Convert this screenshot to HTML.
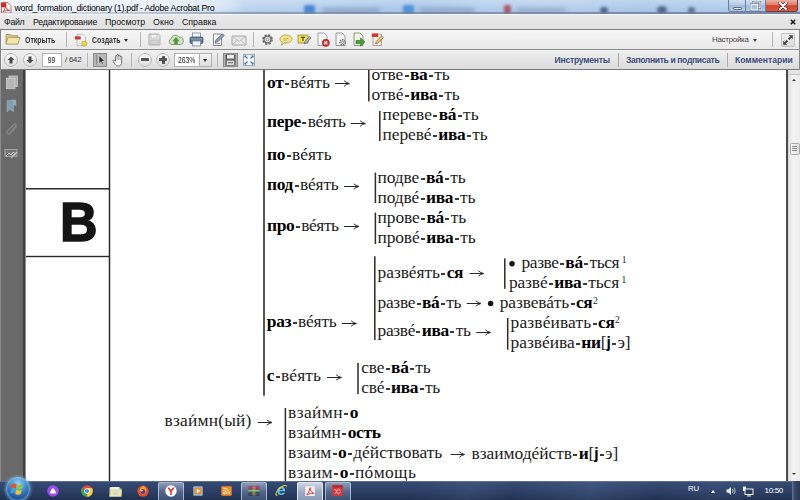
<!DOCTYPE html>
<html lang="ru">
<head>
<meta charset="utf-8">
<title>word_formation_dictionary (1).pdf - Adobe Acrobat Pro</title>
<style>
*{box-sizing:border-box;margin:0;padding:0}
html,body{width:800px;height:500px;overflow:hidden;background:#fff}
body{position:relative;font-family:"Liberation Sans",sans-serif;color:#000}
.abs{position:absolute}
/* ---------- title bar ---------- */
#title{left:0;top:0;width:800px;height:14px;background:linear-gradient(rgba(255,255,255,.22),rgba(255,255,255,0) 55%,rgba(90,110,150,.12)),linear-gradient(90deg,#e6eef7 0,#d5e3f3 120px,#c0d6ef 230px,#b6d0ed 330px,#abc9ea 420px,#b5cfec 470px,#b8d1ed 560px,#aecae9 640px,#b3ceeb 725px);overflow:hidden}
#title .t{left:14.4px;top:2px;font-size:8.8px;line-height:12px;color:#000;white-space:nowrap;letter-spacing:-0.23px}
#title .blob{border-radius:50%;filter:blur(3px)}
/* ---------- menu ---------- */
#menu{left:0;top:14px;width:800px;height:16px;background:linear-gradient(#e9e9e9,#e1e1e1);border-top:1px solid #f2f5f9;border-bottom:1.500px solid #7e7e7e}
#menu span{position:absolute;top:1px;font-size:8.8px;line-height:12px;color:#111;white-space:nowrap}
/* ---------- toolbars ---------- */
#tb1{left:0;top:30px;width:800px;height:20px;background:linear-gradient(#f6f6f6,#e9e9e9);border-bottom:1px solid #8e8e8e;box-shadow:inset 1px 0 0 #808080,inset 2px 0 0 #fafafa}
#tb2{left:0;top:50px;width:800px;height:20px;background:linear-gradient(#f0f0f0,#dcdcdc);border-bottom:1px solid #7c7c7c;box-shadow:inset 1px 0 0 #808080,inset 2px 0 0 #f4f4f4}
.sep{position:absolute;width:1px;background:#b5b5b5}
.tbt{position:absolute;font-size:8.4px;font-weight:bold;color:#333;white-space:nowrap;line-height:10px;transform:scaleX(.83);transform-origin:0 50%}
.rb{position:absolute;width:14px;height:14px;border-radius:50%;background:linear-gradient(#fbfbfb,#dedede);border:1px solid #b4b4b4;box-shadow:0 0 0 .5px rgba(255,255,255,.6)}
.inp{position:absolute;background:#fff;border:1px solid #b3b3b3;font-size:8.300px;line-height:12px;text-align:center;color:#222;letter-spacing:0}
.sq{display:inline-block;transform:scaleX(.82)}
.tab{position:absolute;top:5px;font-size:8.600px;font-weight:bold;line-height:10px;color:#3c4f7c;white-space:nowrap;letter-spacing:-.12px}
/* ---------- doc ---------- */
#side{left:0;top:70px;width:23px;height:411px;background:#696969}
#side svg{opacity:.82}
#page{left:26px;top:70px;width:759.5px;height:411px;background:#fff;overflow:hidden}
.ln{position:absolute;background:#1a1a1a}
.tx{position:absolute;font-family:"Liberation Serif",serif;font-size:17.4px;line-height:20px;white-space:nowrap;color:#1c1c1c}
.tx b{font-weight:bold;color:#000;letter-spacing:-.3px}
.tx sup{font-size:9px;line-height:0;vertical-align:6px}
.tx b.j{font-family:"Liberation Sans",sans-serif;font-size:0.9em}
.tx i.h{display:inline-block;width:4px;height:2px;background:#3a3a3a;vertical-align:3px;margin:0 1.4px}
.ia{position:relative}.ia i{position:absolute;left:0.1em;top:0;font-style:normal;letter-spacing:0}
.ar{position:absolute;overflow:visible}
.bu{position:absolute;width:5.6px;height:5.6px;border-radius:50%;background:#111}
.sp{position:absolute;font-family:"Liberation Serif",serif;font-size:9.5px;line-height:10px;color:#222}
.bigB{left:34.3px;top:121.6px;font-family:"Liberation Sans",sans-serif;font-weight:bold;font-size:55px;line-height:60px;color:#151515;-webkit-text-stroke:1.5px #151515;transform:scaleX(.945);transform-origin:0 0}
/* ---------- taskbar ---------- */
#task{left:0;top:481px;width:800px;height:19px;background:linear-gradient(115deg,rgba(255,255,255,0) 380px,rgba(140,170,220,.10) 430px,rgba(255,255,255,0) 470px,rgba(140,170,220,.13) 540px,rgba(255,255,255,0) 600px,rgba(140,170,220,.08) 650px,rgba(255,255,255,0) 700px),linear-gradient(#6f7f9b 0,#354a72 1.500px,#2c4066 50%,#203252 100%)}
.tbn{position:absolute;top:.500px;height:18.500px;border:1px solid rgba(205,218,240,.7);border-bottom:0;border-radius:2px 2px 0 0;background:linear-gradient(rgba(215,225,242,.55),rgba(140,160,195,.42) 50%,rgba(105,128,170,.40))}
.tbn.act{background:linear-gradient(rgba(235,240,250,.85),rgba(190,203,226,.78) 50%,rgba(165,182,214,.78));border-color:rgba(235,240,250,.9)}
</style>
</head>
<body>
<!-- TITLE -->
<div id="title" class="abs">
  <div class="abs blob" style="left:-10px;top:-6px;width:250px;height:24px;background:rgba(255,255,255,.55);filter:blur(6px)"></div>
  <div class="abs blob" style="left:304px;top:5px;width:11px;height:9px;background:#3f82d2;border-radius:2px;filter:blur(1.8px);opacity:.9"></div>
  <div class="abs blob" style="left:322px;top:8px;width:58px;height:5px;background:#7f97b8;border-radius:2px;filter:blur(2px);opacity:.7"></div>
  <div class="abs blob" style="left:403px;top:5px;width:11px;height:9px;background:#4a8cd8;border-radius:2px;filter:blur(1.8px);opacity:.9"></div>
  <div class="abs blob" style="left:420px;top:8px;width:55px;height:5px;background:#8098b8;border-radius:2px;filter:blur(2px);opacity:.7"></div>
  <div class="abs blob" style="left:504px;top:5px;width:7px;height:9px;background:#b0566c;border-radius:2px;filter:blur(1.6px)"></div>
  <div class="abs blob" style="left:516px;top:8px;width:50px;height:5px;background:#8098b8;border-radius:2px;filter:blur(2px);opacity:.6"></div>
  <div class="abs blob" style="left:600px;top:7px;width:8px;height:7px;background:#4f6688;filter:blur(1.8px)"></div>
  <div class="abs blob" style="left:657px;top:6px;width:10px;height:8px;background:#4f6688;filter:blur(1.8px)"></div>
  <div class="abs blob" style="left:688px;top:7px;width:7px;height:7px;background:#5a7090;filter:blur(1.8px)"></div>
  <div class="abs" style="left:0;top:12px;width:800px;height:2px;background:linear-gradient(90deg,rgba(120,135,160,.0) 0,rgba(110,125,150,.55) 240px,rgba(100,118,148,.75) 100%)"></div>
  <svg class="abs" style="left:1px;top:1.500px" width="10.500" height="11.500" viewBox="0 0 10 11"><path d="M.5.5h6l3 3v7h-9z" fill="#fff" stroke="#a33" stroke-width=".7"/><rect x="0" y="1" width="5" height="4" fill="#d22"/><path d="M2 9.5c1.5-2 2-4 2.300-5.500c.4 2 2 3.500 4 4c-2-.2-4.500.3-6.300 1.500z" fill="none" stroke="#c22" stroke-width=".8"/></svg>
  <div class="abs t">word_formation_dictionary (1).pdf - Adobe Acrobat Pro</div>
  <!-- window buttons -->
  <div class="abs" style="left:727.500px;top:0;width:18.500px;height:12px;background:linear-gradient(#d3e0f0,#b4cbe6 45%,#9fbbdd 52%,#b3cbe6);border:1px solid #6d7f9c;border-top:0;border-radius:0 0 0 3px"></div>
  <div class="abs" style="left:746px;top:0;width:19.500px;height:12px;background:linear-gradient(#d3e0f0,#b4cbe6 45%,#9fbbdd 52%,#b3cbe6);border:1px solid #6d7f9c;border-top:0;border-left:0"></div>
  <div class="abs" style="left:765.500px;top:0;width:32.500px;height:12px;background:linear-gradient(#edb3a6,#de7f6c 42%,#cf452e 52%,#d8573e);border:1px solid #7a3a30;border-top:0;border-left:0;border-radius:0 0 3px 0"></div>
  <div class="abs" style="left:733px;top:7px;width:9px;height:3px;background:#fff;border:.8px solid #5a6f8f;border-radius:1px"></div>
  <svg class="abs" style="left:750px;top:1px" width="11" height="10" viewBox="0 0 11 10"><rect x="3.200" y="1" width="6.800" height="5.600" fill="#b9cde6" stroke="#4f6384" stroke-width="2.200"/><rect x="3.200" y="1" width="6.800" height="5.600" fill="none" stroke="#fff" stroke-width="1.100"/><rect x="1" y="3.400" width="6.800" height="5.600" fill="#a9c0de" stroke="#4f6384" stroke-width="2.200"/><rect x="1" y="3.400" width="6.800" height="5.600" fill="#a9c0de" stroke="#fff" stroke-width="1.100"/></svg>
  <svg class="abs" style="left:777.500px;top:2px" width="10" height="8" viewBox="0 0 10 8"><path d="M2 1L8 7M8 1L2 7" stroke="#5a2018" stroke-width="3.200" stroke-linecap="round"/><path d="M2 1L8 7M8 1L2 7" stroke="#fff" stroke-width="2" stroke-linecap="round"/></svg>
</div>
<!-- MENU -->
<div id="menu" class="abs">
  <span style="left:4px;letter-spacing:-.3px">Файл</span>
  <span style="left:33px;letter-spacing:-.21px">Редактирование</span>
  <span style="left:105px">Просмотр</span>
  <span style="left:153px;letter-spacing:.1px">Окно</span>
  <span style="left:182px">Справка</span>
  <svg class="abs" style="left:790px;top:4px" width="6" height="6" viewBox="0 0 6 6"><path d="M.8 .8L5.200 5.200M5.200 .8L.8 5.200" stroke="#111" stroke-width="1.500"/></svg>
</div>
<!-- TOOLBARS -->
<div id="tb1" class="abs">
  <!-- folder -->
  <svg class="abs" style="left:4.500px;top:2px" width="16" height="13" viewBox="0 0 16 13"><path d="M1 2.500h4.500l1 1.300H13v8H1z" fill="#d9c88a" stroke="#9a8a52" stroke-width=".8"/><path d="M1 12L3 5.500h12L13 12z" fill="#f3e6ad" stroke="#a89858" stroke-width=".8"/></svg>
  <div class="tbt" style="left:25px;top:5px">Открыть</div>
  <div class="sep" style="left:66px;top:2px;height:15px"></div>
  <!-- create -->
  <svg class="abs" style="left:74px;top:3px" width="14" height="14" viewBox="0 0 16 16"><path d="M3.500 1.500h6.500l3 3v10H3.500z" fill="#fbfbfb" stroke="#a9a9a9" stroke-width=".9"/><rect x="1" y="3.800" width="6.800" height="3.600" rx=".8" fill="#d33a2f"/><circle cx="11.800" cy="12.200" r="3" fill="#ecd24e" stroke="#b59a2a" stroke-width=".7"/><path d="M5 10h4M5 12h3" stroke="#cfcfcf" stroke-width=".8"/></svg>
  <div class="tbt" style="left:92px;top:5px">Создать</div>
  <div class="abs" style="left:124px;top:9px;border:2.500px solid transparent;border-top:3px solid #333;border-bottom:0"></div>
  <div class="sep" style="left:140px;top:2px;height:15px"></div>
  <!-- save (disabled) -->
  <svg class="abs" style="left:148px;top:3px" width="13" height="13" viewBox="0 0 13 13"><path d="M1 1h9.500L12 2.500V12H1z" fill="#e4e4e4" stroke="#a8a8a8" stroke-width=".9"/><rect x="3" y="1.500" width="6" height="3.500" fill="#f6f6f6" stroke="#b4b4b4" stroke-width=".6"/><rect x="2.800" y="7" width="7.400" height="4.600" fill="#d2d2d2" stroke="#b0b0b0" stroke-width=".6"/></svg>
  <!-- cloud -->
  <svg class="abs" style="left:168px;top:3px" width="16" height="13" viewBox="0 0 16 13"><path d="M4 11.500a3 3 0 0 1-.6-5.900A4 4 0 0 1 11 4.300a3.600 3.600 0 0 1 1.300 7.200z" fill="#cfe3c0" stroke="#7e9a76" stroke-width=".9"/><path d="M8 4.500l3 3.300H9.300V11H6.700V7.800H5z" fill="#4f9a36" stroke="#3d7a2a" stroke-width=".5"/></svg>
  <!-- printer -->
  <svg class="abs" style="left:189px;top:2px" width="15" height="15" viewBox="0 0 15 15"><rect x="3.500" y="1" width="8" height="5" fill="#f4f6f8" stroke="#7f8c99" stroke-width=".8"/><rect x="1" y="5" width="13" height="6.500" rx="1.500" fill="#5c7894" stroke="#42566c" stroke-width=".8"/><rect x="3.500" y="9" width="8" height="5" fill="#eef1f4" stroke="#7f8c99" stroke-width=".8"/><path d="M2 7h11" stroke="#9fb6cc" stroke-width=".8"/></svg>
  <!-- edit -->
  <svg class="abs" style="left:212px;top:2px" width="14" height="15" viewBox="0 0 14 15"><path d="M1.500 2h8v11.500h-8z" fill="#f3f3f3" stroke="#7c7c7c" stroke-width=".9"/><path d="M3 10.500l1-2.700 6.500-6 1.800 1.800-6.500 6z" fill="#8fa3b8" stroke="#4a5a6c" stroke-width=".7"/><path d="M3 11.500h5" stroke="#888" stroke-width=".8"/></svg>
  <!-- mail -->
  <svg class="abs" style="left:231px;top:5px" width="16" height="11" viewBox="0 0 16 11"><rect x="1" y="1" width="14" height="9" rx=".8" fill="#e9e9e9" stroke="#9c9c9c" stroke-width=".9"/><path d="M1.500 1.500L8 6.500l6.500-5M1.500 9.500L6 5.500M14.500 9.500L10 5.500" fill="none" stroke="#adadad" stroke-width=".8"/></svg>
  <div class="sep" style="left:253px;top:2px;height:15px"></div>
  <!-- gear -->
  <svg class="abs" style="left:261px;top:3px" width="13" height="13" viewBox="0 0 13 13"><circle cx="6.500" cy="6.500" r="4.300" fill="none" stroke="#6f6f6f" stroke-width="2.200" stroke-dasharray="2.100 1.280"/><circle cx="6.500" cy="6.500" r="3.400" fill="#e9e9e9" stroke="#6f6f6f" stroke-width="1.300"/><circle cx="6.500" cy="6.500" r="1.300" fill="#f4f4f4" stroke="#777" stroke-width=".7"/></svg>
  <!-- comment -->
  <svg class="abs" style="left:279px;top:4px" width="14" height="12" viewBox="0 0 14 12"><path d="M7 1c3.300 0 6 1.800 6 4s-2.700 4-6 4c-.5 0-1 0-1.500-.1L2.500 11l.7-2.800C1.800 7.500 1 6.300 1 5c0-2.200 2.700-4 6-4z" fill="#f2e58a" stroke="#a89a3a" stroke-width=".8"/><path d="M4.500 4.500h5M4.500 6h3.500" stroke="#b5a84a" stroke-width=".7"/></svg>
  <!-- highlight -->
  <svg class="abs" style="left:297px;top:3px" width="15" height="13" viewBox="0 0 15 13"><rect x="1" y="2" width="10" height="8" fill="#efe05a" stroke="#9a8f30" stroke-width=".8"/><path d="M3.800 4.200h4.400M6 4.200V8" stroke="#3a3a20" stroke-width="1.100"/><path d="M7 11l1-2.500 4.500-5 1.500 1.500-4.500 5z" fill="#aeb9c6" stroke="#5a6572" stroke-width=".7"/></svg>
  <!-- doc red x -->
  <svg class="abs" style="left:317px;top:2px" width="13" height="15" viewBox="0 0 13 15"><path d="M1 1h6l3 3v9.500H1z" fill="#f8f8f8" stroke="#8a8a8a" stroke-width=".8"/><circle cx="8.800" cy="10.800" r="3.600" fill="#d5302a" stroke="#8e1a16" stroke-width=".6"/><path d="M7.300 9.300l3 3M10.300 9.300l-3 3" stroke="#fff" stroke-width="1.100"/></svg>
  <!-- doc gear -->
  <svg class="abs" style="left:335px;top:2px" width="12" height="15" viewBox="0 0 12 15"><path d="M1 1h6l3 3v9.500H1z" fill="#f4f4f4" stroke="#808080" stroke-width=".8"/><circle cx="7.500" cy="10.300" r="2.600" fill="#dcdcdc" stroke="#6a6a6a" stroke-width="1.300" stroke-dasharray="1.400 .9"/><circle cx="7.500" cy="10.300" r="1" fill="#f4f4f4" stroke="#666" stroke-width=".6"/></svg>
  <!-- doc green arrow -->
  <svg class="abs" style="left:353px;top:2px" width="13" height="15" viewBox="0 0 13 15"><path d="M1 1h6l3 3v9.500H1z" fill="#eef3ea" stroke="#6f8a66" stroke-width=".8"/><path d="M3 8.500h4.500V6l4.500 4-4.500 4v-2.500H3z" fill="#4e9a3a" stroke="#2f6a22" stroke-width=".6"/></svg>
  <!-- red pencil -->
  <svg class="abs" style="left:371px;top:2px" width="13" height="15" viewBox="0 0 13 15"><path d="M2 2h8.500v11.500H2z" fill="#f6f2ea" stroke="#9a8f80" stroke-width=".8"/><rect x=".8" y="1.500" width="6.500" height="3.600" rx=".6" fill="#d6342c"/><path d="M4.500 12l.8-2.600 5.200-5.600 1.800 1.700-5.200 5.600z" fill="#e8c27a" stroke="#8a6a30" stroke-width=".7"/></svg>
  <!-- right -->
  <div class="abs" style="left:712px;top:5px;font-size:7.900px;line-height:10px;color:#444;white-space:nowrap;letter-spacing:-.25px">Настройка</div>
  <div class="abs" style="left:753px;top:9px;border:2.500px solid transparent;border-top:3px solid #444;border-bottom:0"></div>
  <div class="sep" style="left:772px;top:2px;height:15px"></div>
  <div class="abs" style="left:781px;top:2.500px;width:14px;height:14px;background:linear-gradient(#f0f0f0,#dadada);border:1px solid #c2c2c2;border-radius:1px"></div>
  <svg class="abs" style="left:782px;top:3.500px" width="12" height="12" viewBox="0 0 12 12"><path d="M6.800 1.200h4v4z" fill="#444"/><path d="M9.600 2.400L6.600 5.400" stroke="#444" stroke-width="2"/><path d="M5.200 10.800h-4v-4z" fill="#444"/><path d="M2.400 9.600L5.400 6.600" stroke="#444" stroke-width="2"/></svg>
</div>
<div id="tb2" class="abs">
  <!-- up / down -->
  <div class="rb" style="left:4px;top:3px"></div>
  <svg class="abs" style="left:7px;top:6px" width="8" height="8" viewBox="0 0 8 8"><path d="M4 .5L7.500 4H5.500V7.500h-3V4H.5z" fill="#4b4b4b"/></svg>
  <div class="rb" style="left:23px;top:3px"></div>
  <svg class="abs" style="left:26px;top:6px" width="8" height="8" viewBox="0 0 8 8"><path d="M4 7.500L7.500 4H5.500V.5h-3V4H.5z" fill="#4b4b4b"/></svg>
  <div class="inp" style="left:42px;top:3px;width:20px;height:14px"><span class="sq">99</span></div>
  <div class="abs" style="left:65px;top:5px;font-size:7.800px;line-height:10px;color:#333;white-space:nowrap;letter-spacing:-.2px">/ 642</div>
  <div class="sep" style="left:87px;top:3px;height:14px"></div>
  <!-- select tool (active) -->
  <div class="abs" style="left:93px;top:3px;width:14px;height:14px;background:#b9b9b9;border:1px solid #8c8c8c"></div>
  <svg class="abs" style="left:94px;top:4px" width="12" height="12" viewBox="0 0 12 12"><path d="M2.500 1v9.500" stroke="#8a8a8a" stroke-width="1.200"/><path d="M5 1.500v8l2-1.800 1.300 3 1.200-.5-1.300-3h2.600z" fill="#2a2a2a" stroke="#f2f2f2" stroke-width=".5"/></svg>
  <!-- hand -->
  <svg class="abs" style="left:112px;top:3px" width="13" height="14" viewBox="0 0 13 14"><path d="M3.500 8V3.300c0-1 1.500-1 1.500 0V2.200c0-1 1.600-1 1.600 0v.7c0-1 1.600-1 1.600 0v1c0-.9 1.500-.9 1.500 0V9c0 2.500-1.200 4-3.500 4-2 0-2.800-1-3.700-2.600L1.200 8.200c-.5-.9.600-1.600 1.200-.8z" fill="#f7f7f7" stroke="#555" stroke-width=".8"/><path d="M5 3.300V7M6.600 2.900V7M8.200 3.900V7" stroke="#777" stroke-width=".6"/></svg>
  <div class="sep" style="left:131px;top:3px;height:14px"></div>
  <!-- minus / plus -->
  <div class="rb" style="left:138px;top:3px"></div>
  <div class="abs" style="left:141px;top:8.300px;width:8px;height:3px;background:#555;border-radius:.5px"></div>
  <div class="rb" style="left:156px;top:3px"></div>
  <div class="abs" style="left:159px;top:8.300px;width:8px;height:3px;background:#555;border-radius:.5px"></div>
  <div class="abs" style="left:161.500px;top:5.800px;width:3px;height:8px;background:#555;border-radius:.5px"></div>
  <div class="inp" style="left:174px;top:3px;width:26px;height:14px"><span class="sq">263%</span></div>
  <div class="abs" style="left:199px;top:3px;width:13px;height:14px;background:linear-gradient(#f6f6f6,#dedede);border:1px solid #b0b0b0"></div>
  <div class="abs" style="left:203px;top:9px;border:2.500px solid transparent;border-top:3px solid #333;border-bottom:0"></div>
  <div class="sep" style="left:217px;top:3px;height:14px"></div>
  <!-- fit width (active) -->
  <div class="abs" style="left:223px;top:3px;width:15px;height:14px;background:#b3b3b3;border:1px solid #8a8a8a"></div>
  <svg class="abs" style="left:225px;top:4px" width="11" height="12" viewBox="0 0 11 12"><rect x=".5" y=".5" width="10" height="11" fill="#5c5c5c"/><rect x="2" y="1" width="7" height="3.600" fill="#e9e9e9"/><rect x="1.800" y="6.500" width="7.400" height="4.500" fill="#dcdcdc"/><path d="M3 8.700h5" stroke="#555" stroke-width=".9"/></svg>
  <!-- fit page -->
  <svg class="abs" style="left:243px;top:4px" width="12" height="12" viewBox="0 0 12 12"><rect x=".5" y=".5" width="11" height="11" fill="#f3f6fa" stroke="#8a98aa" stroke-width=".8"/><path d="M2 2l2.500 2.500M10 2L7.500 4.500M2 10l2.500-2.500M10 10L7.500 7.500" stroke="#4f78a8" stroke-width="1.300"/><path d="M1.500 1.500h2.200L1.500 3.700zM10.500 1.500v2.200L8.300 1.500zM1.500 10.500v-2.200l2.200 2.200zM10.500 10.500H8.300l2.200-2.200z" fill="#3f6a9c"/></svg>
  <!-- right tabs -->
  <div class="tab" style="left:554.500px;letter-spacing:-.24px">Инструменты</div>
  <div class="sep" style="left:618px;top:3px;height:14px;background:#a8a8a8"></div>
  <div class="tab" style="left:626px;letter-spacing:-.38px">Заполнить и подписать</div>
  <div class="sep" style="left:727px;top:3px;height:14px;background:#a8a8a8"></div>
  <div class="tab" style="left:735px;letter-spacing:-.01px">Комментарии</div>
</div>
<div class="abs" style="left:799px;top:30px;width:1px;height:40px;background:#8a8a8a"></div>
<!-- DOC -->
<div id="side" class="abs">
  <div class="abs" style="left:0;top:0;width:1px;height:411px;background:#8c8c8c"></div>
  <!-- pages -->
  <svg class="abs" style="left:5px;top:5px" width="14" height="15" viewBox="0 0 14 15"><rect x="4" y="1" width="8.500" height="10.500" fill="#bdbdbd" stroke="#dedede" stroke-width=".8"/><rect x="1.500" y="3.200" width="8.500" height="10.500" fill="#c9c9c9" stroke="#e6e6e6" stroke-width=".8"/></svg>
  <!-- bookmark -->
  <svg class="abs" style="left:6px;top:29px" width="11" height="14" viewBox="0 0 11 14"><path d="M4.500.8h5.700v6.500L8.500 6 7.500 7z" fill="#9fb6c8"/><path d="M1 1.500h6.500V13L4.200 10.200 1 13z" fill="#8ca9be" stroke="#a9c0d0" stroke-width=".5"/></svg>
  <!-- clip -->
  <svg class="abs" style="left:5px;top:53px" width="14" height="14" viewBox="0 0 14 14"><path d="M11.500 3.500L5 10.500a1.800 1.800 0 0 1-2.600-2.500L9 1.500a1.200 1.200 0 0 1 2 1.500L5 9.500" fill="none" stroke="#8e8e8e" stroke-width="1.200"/></svg>
  <!-- signature -->
  <svg class="abs" style="left:4px;top:78px" width="15" height="12" viewBox="0 0 15 12"><rect x="1" y="1.500" width="12" height="7" fill="#7a7a7a" stroke="#c9c9c9" stroke-width=".7"/><path d="M2 8l3-3 2 2 2.500-3 2 2.500" fill="none" stroke="#eee" stroke-width="1"/><path d="M6 11l1-2.800 5.500-5 1.500 1.600-5.500 5z" fill="#d8d8d8" stroke="#555" stroke-width=".5"/></svg>
</div>
<div class="abs" style="left:22.500px;top:70px;width:2.200px;height:411px;background:#3f3f3f"></div>
<div class="abs" style="left:24.700px;top:70px;width:1.500px;height:411px;background:#8f8f8f"></div>
<div id="page" class="abs">
<div class="abs bigB">В</div>
<!--GEN-->
<div class="tx" style="left:241.0px;top:2px;letter-spacing:0.07px"><b>от</b><i class="h"></i>вéять</div>
<div class="tx" style="left:345.6px;top:-6px;letter-spacing:-0.08px">отве<i class="h"></i><b>ва</b><i class="h"></i>ть</div>
<div class="tx" style="left:345.6px;top:14px;letter-spacing:-0.05px">отвé<i class="h"></i><b>ива</b><i class="h"></i>ть</div>
<div class="tx" style="left:241.0px;top:41px;letter-spacing:-0.32px"><b>пере</b><i class="h"></i>вéять</div>
<div class="tx" style="left:356.6px;top:34px;letter-spacing:0.02px">переве<i class="h"></i><b>вá</b><i class="h"></i>ть</div>
<div class="tx" style="left:356.6px;top:54px;letter-spacing:-0.09px">перевé<i class="h"></i><b>ива</b><i class="h"></i>ть</div>
<div class="tx" style="left:241.0px;top:74px;letter-spacing:0.05px"><b>по</b><i class="h"></i>вéять</div>
<div class="tx" style="left:241.0px;top:104px;letter-spacing:-0.15px"><b>под</b><i class="h"></i>вéять</div>
<div class="tx" style="left:351.6px;top:97px;letter-spacing:-0.11px">подве<i class="h"></i><b>вá</b><i class="h"></i>ть</div>
<div class="tx" style="left:351.6px;top:117px;letter-spacing:-0.14px">подвé<i class="h"></i><b>ива</b><i class="h"></i>ть</div>
<div class="tx" style="left:241.0px;top:145px;letter-spacing:-0.43px"><b>про</b><i class="h"></i>вéять</div>
<div class="tx" style="left:351.6px;top:137px;letter-spacing:-0.10px">прове<i class="h"></i><b>вá</b><i class="h"></i>ть</div>
<div class="tx" style="left:351.6px;top:157px;letter-spacing:-0.14px">провé<i class="h"></i><b>ива</b><i class="h"></i>ть</div>
<div class="tx" style="left:240.8px;top:241px;letter-spacing:-0.18px"><b>раз</b><i class="h"></i>вéять</div>
<div class="tx" style="left:351.6px;top:192px;letter-spacing:-0.06px">развéять<i class="h"></i><b>ся</b></div>
<div class="tx" style="left:495.6px;top:182px;letter-spacing:-0.44px">разве<i class="h"></i><b>вá</b><i class="h"></i>ться</div>
<div class="tx" style="left:482.9px;top:202px;letter-spacing:-0.12px">развé<i class="h"></i><b>ива</b><i class="h"></i>ться</div>
<div class="tx" style="left:351.6px;top:222px;letter-spacing:-0.32px">разве<i class="h"></i><b>вá</b><i class="h"></i>ть</div>
<div class="tx" style="left:473.8px;top:222px;letter-spacing:-0.14px">развевáть<i class="h"></i><b>ся</b></div>
<div class="tx" style="left:351.6px;top:250px;letter-spacing:-0.36px">развé<i class="h"></i><b>ива</b><i class="h"></i>ть</div>
<div class="tx" style="left:484.6px;top:242px;letter-spacing:0.14px">развéивать<i class="h"></i><b>ся</b></div>
<div class="tx" style="left:484.6px;top:262px;letter-spacing:-0.03px">развéива<i class="h"></i><b>ни</b>[<b class="j">j</b><i class="h"></i>э]</div>
<div class="tx" style="left:240.8px;top:295px;letter-spacing:0.11px"><b>с</b><i class="h"></i>вéять</div>
<div class="tx" style="left:335.2px;top:287px;letter-spacing:-0.15px">све<i class="h"></i><b>вá</b><i class="h"></i>ть</div>
<div class="tx" style="left:335.2px;top:307px;letter-spacing:-0.23px">свé<i class="h"></i><b>ива</b><i class="h"></i>ть</div>
<div class="tx" style="left:138.6px;top:340px;letter-spacing:0.20px">вза<span class="ia">и<i>´</i></span>мн(ый)</div>
<div class="tx" style="left:262.0px;top:332px;letter-spacing:0.43px">вза<span class="ia">и<i>´</i></span>мн<i class="h"></i><b>о</b></div>
<div class="tx" style="left:262.0px;top:352px;letter-spacing:0.07px">вза<span class="ia">и<i>´</i></span>мн<i class="h"></i><b>ость</b></div>
<div class="tx" style="left:262.0px;top:372px;letter-spacing:0.03px">взаим<i class="h"></i><b>о</b><i class="h"></i>дéйствовать</div>
<div class="tx" style="left:445.6px;top:373px;letter-spacing:-0.03px">взаимодéйств<i class="h"></i><b>и</b>[<b class="j">j</b><i class="h"></i>э]</div>
<div class="tx" style="left:262.0px;top:392px;letter-spacing:0.37px">взаим<i class="h"></i><b>о</b><i class="h"></i>пóмощь</div>
<svg class="abs" style="left:0;top:0" width="760" height="411" viewBox="0 0 760 411" fill="#2b2b2b"><rect x="82.75" y="0.00" width="1.5" height="411.00"/><rect x="0.00" y="118.00" width="83.5" height="1.50"/><rect x="0.00" y="185.80" width="83.5" height="1.40"/><rect x="237.20" y="0.00" width="1.6" height="325.70"/><rect x="342.05" y="0.00" width="1.5" height="31.40"/><rect x="353.05" y="41.00" width="1.5" height="30.00"/><rect x="348.65" y="102.60" width="1.5" height="30.40"/><rect x="348.65" y="142.60" width="1.5" height="31.40"/><rect x="348.05" y="186.30" width="1.5" height="83.70"/><rect x="478.05" y="188.40" width="1.5" height="30.40"/><rect x="480.95" y="248.00" width="1.5" height="31.70"/><rect x="331.25" y="293.00" width="1.5" height="31.00"/><rect x="258.65" y="338.00" width="1.5" height="73.00"/><g fill="none" stroke="#262626" stroke-width="1"><path transform="translate(309.00 13.50)" d="M0 0H13.6M9.2 -2.7Q11.2 -.7 14.4 0Q11.2 .7 9.2 2.7"/><path transform="translate(325.00 53.50)" d="M0 0H13.6M9.2 -2.7Q11.2 -.7 14.4 0Q11.2 .7 9.2 2.7"/><path transform="translate(318.00 116.50)" d="M0 0H14.2M9.8 -2.7Q11.8 -.7 15.0 0Q11.8 .7 9.8 2.7"/><path transform="translate(318.00 156.50)" d="M0 0H14.2M9.8 -2.7Q11.8 -.7 15.0 0Q11.8 .7 9.8 2.7"/><path transform="translate(316.00 253.50)" d="M0 0H13.6M9.2 -2.7Q11.2 -.7 14.4 0Q11.2 .7 9.2 2.7"/><path transform="translate(443.60 203.50)" d="M0 0H13.2M8.8 -2.7Q10.8 -.7 14.0 0Q10.8 .7 8.8 2.7"/><path transform="translate(440.80 233.50)" d="M0 0H13.4M9.0 -2.7Q11.0 -.7 14.2 0Q11.0 .7 9.0 2.7"/><path transform="translate(450.30 262.50)" d="M0 0H13.5M9.1 -2.7Q11.1 -.7 14.3 0Q11.1 .7 9.1 2.7"/><path transform="translate(301.00 307.50)" d="M0 0H13.6M9.2 -2.7Q11.2 -.7 14.4 0Q11.2 .7 9.2 2.7"/><path transform="translate(232.00 352.50)" d="M0 0H13.2M8.8 -2.7Q10.8 -.7 14.0 0Q10.8 .7 8.8 2.7"/><path transform="translate(424.50 384.50)" d="M0 0H13.3M8.9 -2.7Q10.9 -.7 14.1 0Q10.9 .7 8.9 2.7"/></g><circle cx="486.00" cy="193.80" r="2.75" fill="#151515"/><circle cx="464.60" cy="233.60" r="2.75" fill="#151515"/></svg>
<div class="sp" style="left:595.7px;top:185.0px">1</div>
<div class="sp" style="left:595.6px;top:204.9px">1</div>
<div class="sp" style="left:567.0px;top:225.7px">2</div>
<div class="sp" style="left:589.0px;top:244.5px">2</div>
<!--/GEN-->
</div>
<!-- page right edge + scrollbar -->
<div class="abs" style="left:785.500px;top:70px;width:2px;height:411px;background:#4b4b4b"></div>
<div class="abs" style="left:787.500px;top:70px;width:1.500px;height:411px;background:#d9d9d9"></div>
<div class="abs" style="left:789px;top:70px;width:11px;height:411px;background:linear-gradient(90deg,#e6e6e6,#f3f3f3 40%,#ececec)"></div>
<div class="abs" style="left:789px;top:70px;width:11px;height:4.500px;background:#e4e4e4;border-bottom:1px solid #c4c4c4"></div>
<div class="abs" style="left:791.700px;top:79.300px;border:2.200px solid transparent;border-bottom:2.700px solid #444;border-top:0"></div>
<div class="abs" style="left:791.700px;top:472.800px;border:2.200px solid transparent;border-top:2.700px solid #444;border-bottom:0"></div>
<div class="abs" style="left:789.500px;top:142.500px;width:10.500px;height:12.500px;background:linear-gradient(90deg,#f6f6f6,#dedede);border:1px solid #a9a9a9;border-radius:1.500px"></div>
<div class="abs" style="left:792px;top:146px;width:5px;height:1px;background:#8c8c8c;box-shadow:0 2px 0 #8c8c8c,0 4px 0 #8c8c8c"></div>
<!-- TASKBAR -->
<div id="task" class="abs">
  <!-- highlighted buttons -->
  <div class="tbn" style="left:158px;width:25.500px"></div>
  <div class="tbn" style="left:241px;width:26px"></div>
  <div class="tbn act" style="left:297px;width:25.500px"></div>
  <div class="tbn" style="left:325px;width:25.500px"></div>
  <!-- alice -->
  <svg class="abs" style="left:47px;top:4px" width="12" height="12" viewBox="0 0 12 12"><circle cx="6" cy="6" r="5.800" fill="#9b4df2"/><path d="M6 3.200c.5 0 .8.300 1.100.8l1.700 3c.4.800 0 1.500-.9 1.500H4.100c-.9 0-1.300-.7-.9-1.500l1.700-3c.3-.5.600-.8 1.100-.8z" fill="#fff"/></svg>
  <!-- chrome -->
  <svg class="abs" style="left:81px;top:3.500px" width="12" height="12" viewBox="0 0 12 12"><circle cx="6" cy="6" r="5.800" fill="#e24a3b"/><path d="M6 6L1 3.100A5.800 5.800 0 0 0 6.300 11.800z" fill="#3aa757"/><path d="M6 6l.3 5.800A5.800 5.800 0 0 0 11 3.100H6z" fill="#f7cb3a"/><circle cx="6" cy="6" r="2.700" fill="#fff"/><circle cx="6" cy="6" r="2.100" fill="#4a8af4"/></svg>
  <!-- explorer -->
  <svg class="abs" style="left:109px;top:4.500px" width="13" height="11" viewBox="0 0 13 11"><path d="M.5 1.500h4l1 1h7v8H.5z" fill="#cfc58f"/><rect x="1.500" y="1" width="9" height="8" fill="#eef3e4"/><path d="M.5 10.500L1.800 4h11L12 10.500z" fill="#ece7b0" stroke="#c9c48e" stroke-width=".5"/><rect x="4" y="5.500" width="5" height="3" fill="#b9d8d4" opacity=".8"/></svg>
  <!-- firefox -->
  <svg class="abs" style="left:137px;top:3.500px" width="12" height="12" viewBox="0 0 12 12"><circle cx="6" cy="6.200" r="5.600" fill="#e7472a"/><path d="M6 .8c2 1 3.500 2.500 3.500 5 0 2-1.500 3.600-3.500 3.600S2.500 7.800 2.500 6C2.500 4 4 3.500 4 2c1 .3 1.500 1 2-1.200z" fill="#f7a826"/><circle cx="5.800" cy="6.500" r="2.500" fill="#4a3a9c"/><path d="M3.200 5.200c1-.8 2.500-.5 3.200.5-1 0-1.500 1-2.700.8z" fill="#f7c63a"/></svg>
  <!-- yandex -->
  <svg class="abs" style="left:164.500px;top:3.500px" width="12" height="12" viewBox="0 0 12 12"><circle cx="6" cy="6" r="5.700" fill="#fff"/><path d="M3.300 2.800L6 6.300 8.700 2.800M6 6.300V10" fill="none" stroke="#e0261c" stroke-width="1.500"/></svg>
  <!-- media -->
  <svg class="abs" style="left:193px;top:5px" width="10" height="10" viewBox="0 0 10 10"><rect x=".3" y=".3" width="9.400" height="9.400" rx="1" fill="#8fc1e6"/><rect x="1.500" y="1.500" width="7" height="7" rx=".8" fill="#f08a24"/><path d="M3.800 2.800L7.200 5 3.800 7.200z" fill="#fff"/></svg>
  <!-- rss -->
  <svg class="abs" style="left:221px;top:4.800px" width="11" height="10" viewBox="0 0 11 10"><rect x=".3" y=".3" width="10.400" height="9.400" rx="1.200" fill="#f08c28"/><circle cx="3.300" cy="7" r="1.100" fill="#fff"/><path d="M2.300 4.300a3 3 0 0 1 3.500 3.500M2.300 2.200a5.200 5.200 0 0 1 5.800 5.800" fill="none" stroke="#ffe9cf" stroke-width="1"/></svg>
  <!-- winrar -->
  <svg class="abs" style="left:248px;top:4.800px" width="12" height="10" viewBox="0 0 12 10"><rect x=".5" y=".3" width="11" height="3" fill="#8a2a6a"/><rect x=".5" y="1.200" width="11" height="1.200" fill="#d8405a"/><rect x=".5" y="3.500" width="11" height="2.800" fill="#2f8a4a"/><rect x=".5" y="4.300" width="11" height="1" fill="#8fd0a0"/><rect x=".5" y="6.600" width="11" height="3" fill="#2a2a3a"/><rect x=".5" y="7.500" width="11" height="1" fill="#6a6a88"/><rect x="4.500" y=".3" width="3" height="9.300" fill="#c9a84a" opacity=".55"/></svg>
  <!-- ie -->
  <svg class="abs" style="left:274px;top:3px" width="14" height="13" viewBox="0 0 14 13"><path d="M3.800 7.300h7.400c.2-2.800-1.600-4.500-3.900-4.500-2.400 0-4.100 1.800-4.100 4.100 0 2.400 1.800 4 4.200 4 1.700 0 3-.8 3.600-2.200H8.800c-.3.500-.9.700-1.500.7-1.100 0-1.800-.7-1.900-2.100zM5.500 6c.2-1 .9-1.600 1.800-1.600S8.900 5 9 6z" fill="#5cc3f0"/><path d="M1.800 11.500C.5 9.500 3 5 7.500 2.200c2.500-1.500 4.800-1.700 5.300-.6.300.6 0 1.600-.6 2.600.3-.9.300-1.500 0-1.900-.6-.7-2.500-.1-4.600 1.300C4 6 1.800 9.300 2.700 10.600c.4.600 1.400.5 2.600 0-1.500 1-3 1.500-3.500.9z" fill="#f2c83a"/></svg>
  <!-- acrobat -->
  <svg class="abs" style="left:304.500px;top:4.500px" width="10" height="10.500" viewBox="0 0 10 10.500"><rect x=".2" y=".2" width="9.600" height="10" rx=".8" fill="#f6f0f0"/><path d="M2 8.500c1.500-1.800 2.500-4 2.800-6.300.1-.8 1-.6.800.3C5.200 4.500 6.500 6.300 8.300 6.800c.8.200.5 1-.3.800C6 7.200 4 7.600 2.500 8.900c-.5.400-.9 0-.5-.4z" fill="none" stroke="#d4281e" stroke-width=".9"/></svg>
  <!-- red -->
  <svg class="abs" style="left:332px;top:4.300px" width="11" height="11" viewBox="0 0 11 11"><rect x=".2" y=".2" width="10.600" height="10.600" rx="1" fill="#d9383a"/><rect x=".2" y=".2" width="10.600" height="2.300" rx="1" fill="#b82428"/><path d="M2.500 4.500l2 1.500 2-1.800 2 1.800M3 8.500c1-1.500 2-1.500 2.500-.5s1.500 1 2.500-.5" fill="none" stroke="#fbe6e6" stroke-width="1"/></svg>
  <!-- start orb -->
  <div class="abs" style="left:6px;top:-4.500px;width:24px;height:24px;border-radius:50%;background:radial-gradient(circle at 50% 28%,#9fd6f2 0,#3d8fcf 38%,#1b4f96 70%,#123a78 100%);box-shadow:0 0 3px 1px rgba(140,200,240,.55),inset 0 0 2px 1px rgba(200,235,255,.55)"></div>
  <svg class="abs" style="left:10px;top:0" width="16" height="15" viewBox="0 0 16 15"><path d="M1.500 3.200c1.800-1 3.600-1 5.300 0L5.600 7.400c-1.700-1-3.500-1-5.300 0z" fill="#e8512c"/><path d="M7.800 3.500c1.800 1 3.600 1 5.400 0L12 7.700c-1.800 1-3.600 1-5.300 0z" fill="#8cc63c"/><path d="M.1 8.400c1.800-1 3.600-1 5.300 0l-1.200 4.200c-1.700-1-3.500-1-5.300 0z" fill="#3aa0e8" transform="translate(1.100 0)"/><path d="M6.400 8.700c1.800 1 3.600 1 5.400 0l-1.200 4.200c-1.800 1-3.600 1-5.300 0z" fill="#f7c52a"/></svg>
  <!-- tray -->
  <div class="abs" style="left:688px;top:3px;font-size:7.800px;line-height:10px;color:#fff;letter-spacing:-.2px">RU</div>
  <div class="abs" style="left:710.500px;top:9px;border:2.600px solid transparent;border-bottom:3px solid #fff;border-top:0"></div>
  <svg class="abs" style="left:726px;top:5px" width="11" height="10" viewBox="0 0 11 10"><path d="M.5 3.500h1.800L5 1v8L2.300 6.500H.5z" fill="#f4f4f4"/><path d="M6.300 3c1 .8 1 3.200 0 4M7.800 1.800c1.700 1.500 1.700 4.900 0 6.400" fill="none" stroke="#e4e4e4" stroke-width=".8"/></svg>
  <svg class="abs" style="left:742px;top:5px" width="12" height="11" viewBox="0 0 12 11"><rect x="1" y=".5" width="3" height="4.500" fill="#f0f0f0"/><rect x="3" y="3" width="8" height="5.500" fill="#2a3a58" stroke="#f4f4f4" stroke-width="1"/><path d="M5 10h4M7 8.500V10" stroke="#f4f4f4" stroke-width=".9"/></svg>
  <div class="abs" style="left:764.500px;top:5px;font-size:8px;line-height:10px;color:#fff;letter-spacing:-.3px">10:50</div>
  <div class="abs" style="left:791.500px;top:0;width:8.500px;height:19px;background:linear-gradient(90deg,#4b5c7c,#33435f 40%,#2a3954);border-left:1px solid #5f7090"></div>
</div>

</body>
</html>
